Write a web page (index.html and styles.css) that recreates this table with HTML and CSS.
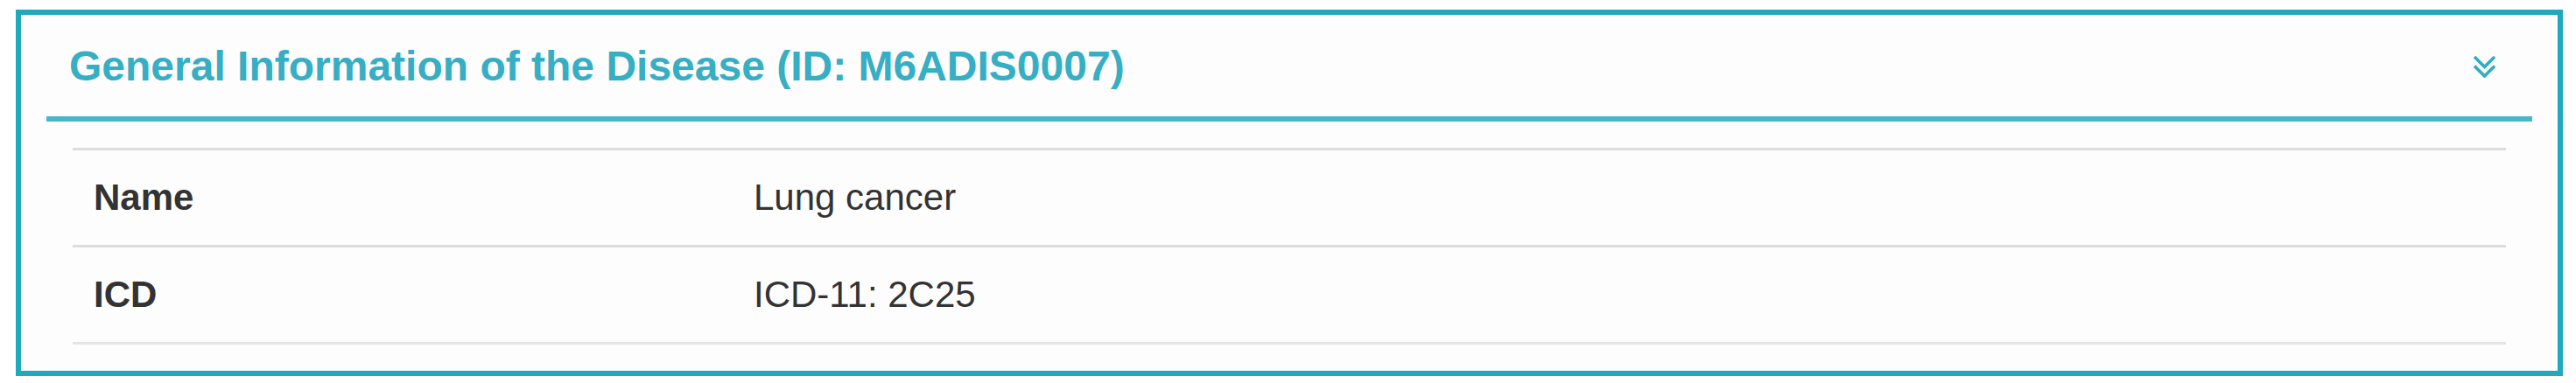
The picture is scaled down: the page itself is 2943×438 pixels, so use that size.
FILE: index.html
```html
<!DOCTYPE html>
<html lang="en">
<head>
<meta charset="utf-8">
<title>General Information of the Disease</title>
<link rel="stylesheet" href="styles.css">
</head>
<body>
<div class="panel">
  <div class="panel-heading">
    <h3 class="panel-title">General Information of the Disease (ID: M6ADIS0007)</h3>
    <span class="toggle" aria-label="collapse">
      <svg width="27" height="26" viewBox="0 0 27 26">
        <polyline points="2,2 13.5,13.5 25,2" fill="none" stroke="#2fadc2" stroke-width="3.6"/>
        <polyline points="2,12.5 13.5,24 25,12.5" fill="none" stroke="#2fadc2" stroke-width="3.6"/>
      </svg>
    </span>
  </div>
  <div class="panel-body">
    <table class="info-table">
      <tbody>
        <tr>
          <th class="label-cell">Name</th>
          <td class="value-cell">Lung cancer</td>
        </tr>
        <tr>
          <th class="label-cell">ICD</th>
          <td class="value-cell">ICD-11: 2C25</td>
        </tr>
      </tbody>
    </table>
  </div>
</div>
</body>
</html>
```

FILE: styles.css
```css
html, body {
  margin: 0;
  padding: 0;
  background: #ffffff;
}

body {
  font-family: "Liberation Sans", Arial, Helvetica, sans-serif;
  color: #333333;
}

.panel {
  margin: 11px 15px 8px 18px;
  border: 6px solid #22a8bd;
  background: #fdfdfd;
}

.panel-heading {
  margin: 0 29px;
  padding: 31px 26px 30px 26px;
  border-bottom: 6px solid #4ab6c8;
  display: flex;
  justify-content: space-between;
  align-items: center;
}

.panel-title {
  margin: 0;
  font-size: 48px;
  line-height: 55px;
  font-weight: bold;
  color: #36aec3;
}

.toggle {
  display: flex;
  margin-right: 15px;
}

.panel-body {
  padding: 30px 59px;
}

.info-table {
  width: 100%;
  border-collapse: collapse;
  font-size: 42px;
  line-height: 60px;
}

.info-table th,
.info-table td {
  padding: 24px;
  border-top: 3px solid #dddddd;
  text-align: left;
  vertical-align: middle;
}

.info-table tr:last-child th,
.info-table tr:last-child td {
  border-bottom: 3px solid #e4e4e4;
}

.label-cell {
  width: 706px;
  font-weight: bold;
}

.value-cell {
  font-weight: normal;
}
```
